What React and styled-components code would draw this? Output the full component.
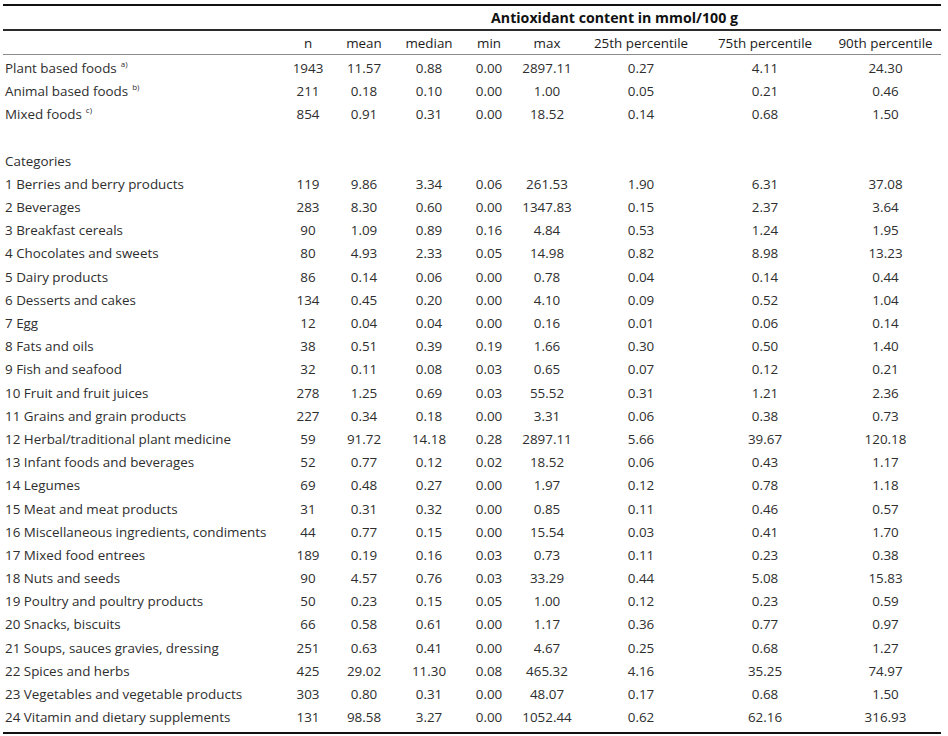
import React from 'react';
import styled, { createGlobalStyle } from 'styled-components';

const GlobalStyle = createGlobalStyle`
  html, body {
    margin: 0;
    padding: 0;
    background: #fff;
  }
  body {
    font-family: "Open Sans", "DejaVu Sans", sans-serif;
    color: #2e2e2e;
    -webkit-font-smoothing: antialiased;
  }
`;

const COLS = '277px 56px 56px 74px 46px 70px 118px 130px 111px';

const Page = styled.div`
  padding: 4px 0 0 3px;
`;

const Table = styled.div`
  width: 938px;
  border-top: 2px solid #111;
  border-bottom: 2px solid #111;
  font-size: 13.4px;
`;

const Row = styled.div`
  display: grid;
  grid-template-columns: ${COLS};
  align-items: center;
  height: ${(p) => p.$h || '23.2px'};
  border-bottom: ${(p) => p.$rule || 'none'};
`;

const Body = styled.div`
  padding: 1.4px 0 2.8px;
`;

const Spanner = styled.div`
  grid-column: 2 / -1;
  text-align: center;
  font-size: 14.2px;
  font-weight: 700;
  color: #111;
  padding-left: 8px;
`;

const Head = styled.div`
  text-align: center;
  color: #1c1c1c;
  white-space: nowrap;
`;

const Label = styled.div`
  padding-left: 2px;
  white-space: nowrap;
`;

const Num = styled.div`
  text-align: center;
  white-space: nowrap;
`;

const Note = styled.sup`
  font-size: 8px;
  margin-left: 4px;
  vertical-align: 6px;
  line-height: 0;
`;

const headers = ['n', 'mean', 'median', 'min', 'max', '25th percentile', '75th percentile', '90th percentile'];

const groups = [
  ['Plant based foods', 'a)', ['1943', '11.57', '0.88', '0.00', '2897.11', '0.27', '4.11', '24.30']],
  ['Animal based foods', 'b)', ['211', '0.18', '0.10', '0.00', '1.00', '0.05', '0.21', '0.46']],
  ['Mixed foods', 'c)', ['854', '0.91', '0.31', '0.00', '18.52', '0.14', '0.68', '1.50']],
];

const categories = [
  ['1 Berries and berry products', '119', '9.86', '3.34', '0.06', '261.53', '1.90', '6.31', '37.08'],
  ['2 Beverages', '283', '8.30', '0.60', '0.00', '1347.83', '0.15', '2.37', '3.64'],
  ['3 Breakfast cereals', '90', '1.09', '0.89', '0.16', '4.84', '0.53', '1.24', '1.95'],
  ['4 Chocolates and sweets', '80', '4.93', '2.33', '0.05', '14.98', '0.82', '8.98', '13.23'],
  ['5 Dairy products', '86', '0.14', '0.06', '0.00', '0.78', '0.04', '0.14', '0.44'],
  ['6 Desserts and cakes', '134', '0.45', '0.20', '0.00', '4.10', '0.09', '0.52', '1.04'],
  ['7 Egg', '12', '0.04', '0.04', '0.00', '0.16', '0.01', '0.06', '0.14'],
  ['8 Fats and oils', '38', '0.51', '0.39', '0.19', '1.66', '0.30', '0.50', '1.40'],
  ['9 Fish and seafood', '32', '0.11', '0.08', '0.03', '0.65', '0.07', '0.12', '0.21'],
  ['10 Fruit and fruit juices', '278', '1.25', '0.69', '0.03', '55.52', '0.31', '1.21', '2.36'],
  ['11 Grains and grain products', '227', '0.34', '0.18', '0.00', '3.31', '0.06', '0.38', '0.73'],
  ['12 Herbal/traditional plant medicine', '59', '91.72', '14.18', '0.28', '2897.11', '5.66', '39.67', '120.18'],
  ['13 Infant foods and beverages', '52', '0.77', '0.12', '0.02', '18.52', '0.06', '0.43', '1.17'],
  ['14 Legumes', '69', '0.48', '0.27', '0.00', '1.97', '0.12', '0.78', '1.18'],
  ['15 Meat and meat products', '31', '0.31', '0.32', '0.00', '0.85', '0.11', '0.46', '0.57'],
  ['16 Miscellaneous ingredients, condiments', '44', '0.77', '0.15', '0.00', '15.54', '0.03', '0.41', '1.70'],
  ['17 Mixed food entrees', '189', '0.19', '0.16', '0.03', '0.73', '0.11', '0.23', '0.38'],
  ['18 Nuts and seeds', '90', '4.57', '0.76', '0.03', '33.29', '0.44', '5.08', '15.83'],
  ['19 Poultry and poultry products', '50', '0.23', '0.15', '0.05', '1.00', '0.12', '0.23', '0.59'],
  ['20 Snacks, biscuits', '66', '0.58', '0.61', '0.00', '1.17', '0.36', '0.77', '0.97'],
  ['21 Soups, sauces gravies, dressing', '251', '0.63', '0.41', '0.00', '4.67', '0.25', '0.68', '1.27'],
  ['22 Spices and herbs', '425', '29.02', '11.30', '0.08', '465.32', '4.16', '35.25', '74.97'],
  ['23 Vegetables and vegetable products', '303', '0.80', '0.31', '0.00', '48.07', '0.17', '0.68', '1.50'],
  ['24 Vitamin and dietary supplements', '131', '98.58', '3.27', '0.00', '1052.44', '0.62', '62.16', '316.93'],
];

export default function App() {
  return (
    <Page>
      <GlobalStyle />
      <Table>
        <Row $h="23px" $rule="2px solid #2a2a2a">
          <Spanner>Antioxidant content in mmol/100 g</Spanner>
        </Row>
        <Row $h="23px" $rule="1px solid #8a8a8a">
          <div />
          {headers.map((h) => (
            <Head key={h}>{h}</Head>
          ))}
        </Row>
        <Body>
          {groups.map(([name, note, vals]) => (
            <Row key={name}>
              <Label>
                {name}
                <Note>{note}</Note>
              </Label>
              {vals.map((v, i) => (
                <Num key={i}>{v}</Num>
              ))}
            </Row>
          ))}
          <Row />
          <Row>
            <Label>Categories</Label>
          </Row>
          {categories.map(([name, ...vals]) => (
            <Row key={name}>
              <Label>{name}</Label>
              {vals.map((v, i) => (
                <Num key={i}>{v}</Num>
              ))}
            </Row>
          ))}
        </Body>
      </Table>
    </Page>
  );
}
